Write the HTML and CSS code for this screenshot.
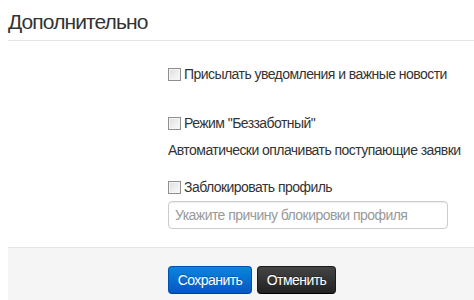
FILE: index.html
```html
<!DOCTYPE html>
<html>
<head>
<meta charset="utf-8">
<link rel="stylesheet" href="styles.css">
</head>
<body>
<form class="form">
  <div class="legend">Дополнительно</div>
  <div class="controls">
    <label class="check row-first"><input type="checkbox" class="cb"><span>Присылать уведомления и важные новости</span></label>
    <label class="check row-second"><input type="checkbox" class="cb"><span>Режим "Беззаботный"</span></label>
    <p class="help">Автоматически оплачивать поступающие заявки</p>
    <label class="check row-third"><input type="checkbox" class="cb"><span>Заблокировать профиль</span></label>
    <input type="text" class="field" placeholder="Укажите причину блокировки профиля">
  </div>
  <div class="actions">
    <button type="button" class="btn btn-primary">Сохранить</button>
    <button type="button" class="btn btn-inverse">Отменить</button>
  </div>
</form>
</body>
</html>
```

FILE: styles.css
```css
html, body {
  margin: 0;
  padding: 0;
  background: #fff;
}
body {
  font-family: "Liberation Sans", Arial, sans-serif;
  font-size: 14px;
  line-height: 20px;
  color: #333;
  width: 474px;
  height: 300px;
  overflow: hidden;
}
.form {
  margin: 0 0 0 8px;
  display: flex;
  flex-direction: column;
}
.legend {
  font-size: 21px;
  letter-spacing: -0.9px;
  line-height: 36px;
  padding-top: 4px;
  color: #333;
  border-bottom: 1px solid #e5e5e5;
  margin-bottom: 23px;
  white-space: nowrap;
}
.controls {
  display: flex;
  flex-direction: column;
  align-items: flex-start;
  padding-left: 160px;
  letter-spacing: -0.55px;
  white-space: nowrap;
}
.check {
  display: flex;
  align-items: center;
  height: 20px;
  line-height: 20px;
  color: #333;
}
.row-second { margin-top: 29px; }
.row-third { margin-top: 17px; }
.help {
  margin: 7px 0 0;
  line-height: 20px;
  color: #333;
}
.cb {
  appearance: none;
  -webkit-appearance: none;
  width: 13px;
  height: 13px;
  margin: 0 3px 0 0;
  box-sizing: border-box;
  border: 1px solid #8f8f8f;
  background: linear-gradient(135deg, #dcdcdc 0%, #f0f0f0 60%, #fafafa 100%);
  box-shadow: inset 0 0 0 1px #f4f4f4;
  flex: none;
}
.field {
  margin-top: 4px;
  box-sizing: border-box;
  width: 280px;
  height: 28px;
  padding: 4px 6px;
  font-family: "Liberation Sans", Arial, sans-serif;
  font-size: 14px;
  letter-spacing: -0.55px;
  color: #555;
  border: 1px solid #cccccc;
  border-radius: 4px;
  box-shadow: inset 0 1px 1px rgba(0,0,0,0.075);
  outline: none;
}
.field::placeholder {
  color: #999;
}
.actions {
  margin-top: 18px;
  background: #f5f5f5;
  border-top: 1px solid #e5e5e5;
  padding: 18px 0 20px 160px;
  display: flex;
  gap: 5px;
}
.btn {
  box-sizing: border-box;
  height: 28px;
  padding: 0;
  font-family: "Liberation Sans", Arial, sans-serif;
  font-size: 14px;
  letter-spacing: -0.55px;
  line-height: 26px;
  text-align: center;
  white-space: nowrap;
  color: #fff;
  border-radius: 4px;
  text-shadow: 0 -1px 0 rgba(0,0,0,0.25);
  cursor: pointer;
}
.btn-primary {
  width: 84px;
  background: linear-gradient(to bottom, #0a86dc, #0457c4);
  border: 1px solid #0450b0;
  border-bottom-color: #03408c;
}
.btn-inverse {
  width: 79px;
  background: linear-gradient(to bottom, #444444, #222222);
  border: 1px solid #1a1a1a;
  border-bottom-color: #000;
}
```
